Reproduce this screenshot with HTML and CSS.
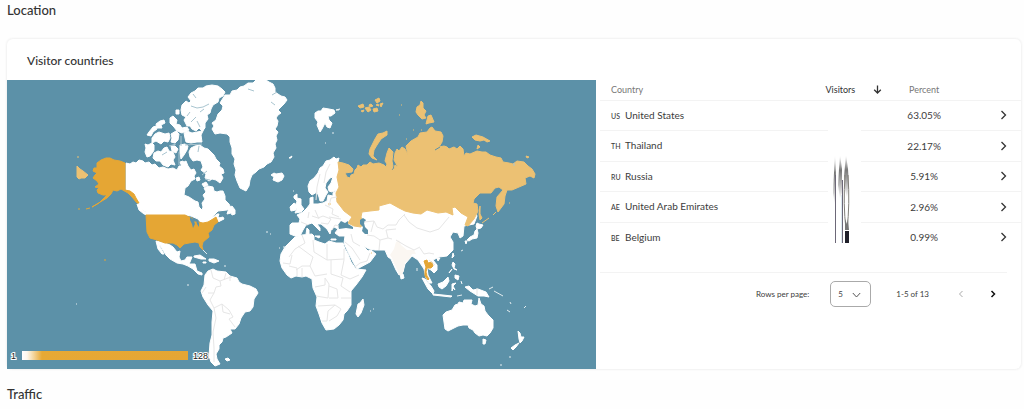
FILE: index.html
```html
<!DOCTYPE html>
<html lang="en">
<head>
<meta charset="utf-8">
<title>Location</title>
<link rel="stylesheet" href="styles.css">
</head>
<body>
<main class="page">
<h2 class="section-title">Location</h2>
<section class="card">
<h3 class="card-title">Visitor countries</h3>
<div class="card-body">
<div class="map">
<svg class="map-svg" viewBox="7 80 589 289" role="img" aria-label="Visitors by country">
<defs>
<linearGradient id="scale"><stop offset="0" stop-color="#fff"/><stop offset=".03" stop-color="#fdf8ee"/><stop offset=".12" stop-color="#e7a935"/><stop offset="1" stop-color="#e5a634"/></linearGradient>
</defs>
<rect x="7" y="80" width="589" height="289" fill="#5c91a8"/>
<g class="land">
<!-- Canada -->
<path d="M126 163L130 164 133 162 136 163 139 160 143 161 145 163 149 162 152 165 155 164 159 168 163 167 168 169 173 168 177 170 179 166 183 166 184 162 186 161 188 166 191 170 194 169 196 173 194 176 195 179 191 181 188 186 185 188 184 195 189 197 192 199 195 201 198 202 199 207 202 210 203 207 202 203 205 199 203 195 206 192 204 188 208 186 213 187 214 191 217 192 220 191 223 191 225 196 225 200 229 204 231 208 227 210 218 211 214 215 212 218 217 214 219 214 218 217 221 219 219 222 216 219 213 221 206 224 202 224 198 219 191 216 185 215 147 215 145 211 140 206 137 201 133 195 130 191 126 190z"/>
<path d="M188 97L191 93 195 91 198 88 203 88 206 86 212 85 218 86 222 89 225 92 223 96 219 98 218 102 213 105 211 109 210 113 207 115 208 119 205 123 205 128 202 131 199 128 196 131 192 129 190 126 187 126 184 120 186 117 182 115 181 110 182 105 186 101 189 103 191 101z"/>
<path d="M184 133L187 131 192 133 202 131 201 128 204 129 201 135 202 142 197 142 191 143 186 142 185 138zM171 134L176 131 179 134 178 140 175 143 171 142 172 138zM155 134L159 132 165 134 169 133 170 138 168 142 164 141 161 144 156 141 152 143 152 138zM149 132L153 127 156 126 157 129 153 132 151 136 147 135zM156 124L160 121 164 120 165 123 161 125 162 128 157 128zM170 118L173 116 177 120 176 124 180 125 183 130 186 131 182 133 177 131 174 127 170 123zM176 110h3v4h-3zM171 146h4l3 3-2 4-4-2zM182 128l5-1 2 3-4 2zM180 145l5-1 3 2-1 4-3 5-3 4-1-6zM180 162l3-1 2 3-3 3z"/>
<path d="M145 144L148 145 152 143 154 145 154 150 153 152 150 156 147 157 145 152 146 148zM154 153L158 151 161 152 164 148 167 147 169 151 173 152 175 157 173 160 175 165 171 164 168 167 163 165 160 161 156 161 153 158z"/>
<path d="M189 152L191 148 195 146 200 145 204 148 208 149 211 152 214 155 216 159 220 163 219 166 223 169 224 173 221 174 223 178 220 183 216 180 212 179 209 181 205 178 206 174 201 170 203 167 201 161 197 160 193 161 190 157zM202 184l4-2 2 3-4 2zM196 178l3-1 1 3-3 1zM137 204l3 1 5 7 3 3-4-1-5-4zM229 208l3-2 3 4 0 4-3 1-1-2-4 1zM219 218l4-1 1 2-4 2z"/>
<!-- Greenland -->
<path d="M225 95L230 95 232 91 237 90 240 87 244 86 248 83 253 83 256 80 266 80 269 82 273 84 275 88 275 92 278 94 281 96 285 97 287 100 284 104 281 107 278 110 281 113 278 115 276 118 278 121 277 126 275 129 278 132 276 136 277 140 275 144 276 148 273 153 274 157 271 162 267 164 264 167 259 169 256 172 252 175 250 180 249 186 246 191 240 188 237 181 235 175 236 170 234 164 235 159 232 154 232 148 230 142 230 137 227 134 220 133 215 134 212 129 214 126 212 123 216 120 218 114 222 110 223 106 220 103z"/>
<path d="M271 175L274 173 276 174 282 173 284 176 282 180 278 182 273 180 274 177zM289 158l3-2-1 2z"/>
<!-- Mexico, Central America and the Caribbean -->
<path d="M156 241L165 243 170 245 173 247 177 252 180 251 179 257 181 261 185 260 187 257 192 257 190 262 189 264 195 264 197 271 202 273 202 275 198 274 193 269 188 266 183 264 177 263 170 259 166 255 161 247 158 242 160 247 164 254 162 254 158 249zM194 256L200 255 206 259 201 259 194 257zM209 259l5 0 5 2-5 2-5-2zM203 262h3v1h-3z"/>
<!-- South America -->
<path d="M205 275L208 271 213 269 217 271 226 272 230 276 237 278 239 282 242 284 250 286 256 289 258 293 254 299 253 307 250 311 245 312 241 318 239 324 235 329 230 329 232 333 226 337 223 338 222 342 219 345 219 349 216 354 217 359 220 364 215 366 211 362 209 356 210 343 212 335 212 322 213 311 208 305 203 297 201 291 204 285z"/>
<path d="M225 359l3-1 2 2-3 1z"/>
<!-- Europe and Asia -->
<path d="M338 162L339 158 336 159 334 157 330 160 326 161 323 166 320 168 318 173 314 178 310 181 308 186 309 192 312 195 317 192 319 197 320 201 323 201 326 195 328 192 325 188 326 183 330 178 333 177 331 183 328 187 329 191 332 192 337 190 333 193 333 196 328 195 327 201 323 203 318 204 313 204 313 197 310 198 310 204 307 208 303 212 297 215 300 219 299 223 292 223 290 225 290 234 295 236 300 236 303 230 306 225 312 223 316 227 320 231 320 228 317 224 321 224 327 229 330 234 331 230 334 227 338 229 335 233 339 236 345 236 344 243 347 250 353 262 357 269 370 262 376 254 371 250 368 251 363 246 369 249 375 250 385 250 388 257 391 259 396 270 399 275 403 272 405 264 412 256 418 260 420 263 424 269 426 278 429 283 432 283 428 275 427 268 431 270 434 273 437 270 437 265 433 260 439 257 447 256 453 250 453 242 450 237 453 232 458 233 460 238 463 236 464 226 474 224 477 216 469 200 340 200z"/>
<path d="M290 207l4-4 3 2-1 5-5 1zM294 196l3-2 0 4 4 1 0 6 3 4-3 3-6 1 2-4-1-4 1-4-3-3zM307 228l2 2 0 5-3-1zM315 236l5 0-1 2zM331 239h5v1h-5z"/>
<path d="M315 113l3-2 3 0 2-3 6 1 5 1 1 3-4 3-3 0 1 4 3 3-2 5-3-1-2-4-3 6-2 3-3-7 1-3-3-4zM336 110l4-1M400 273l3 1 1 4-3 1z"/>
<!-- Japan and the islands of South-East Asia -->
<path d="M477 223l2 1 4 1-2 3-4 1-1-3zM477 229l1 4-1 5-5 1-3 2-2-1 3-3 4-2 1-4zM465 241l2 0-1 3zM453 253l1 3-2 2zM437 258l3 0-2 3zM453 262l2 2-1 4 3 2-3-1-2-4zM455 275l4 1-1 4-3-2zM452 269l-3 4zM422 278l3 1 6 7 3 5-1 3-5-5zM433 294l10 1 9 1-1 1-9-1-9-1zM438 284l5-2 5-5 1 4-3 5-4 3-3-2zM452 284l4-1-3 3 2 4-2-2-1 3zM461 281l1 3M465 287l4-1 4 4 5-1 8 3 3 5-5-1-6 0-8-5z"/>
<!-- Australia and New Zealand -->
<path d="M443 315L446 312 452 310 455 305 458 304 459 302 463 303 464 300 469 300 472 300 471 304 475 306 478 305 479 298 481 304 484 306 485 311 488 315 493 320 493 328 490 333 487 336 483 335 479 336 475 333 473 330 469 328 468 325 463 325 458 326 452 329 448 331 445 329zM483 339l3 1-1 4-2 0zM518 331l2 2 1 4 3 0-2 4-2 2-1-4zM519 343l-3 4-3 3-2-2 4-3z"/>
<!-- Africa -->
<path d="M292 240L295 237 302 235 312 234 314 236 314 240 319 242 325 244 329 241 336 243 343 243 345 249 348 254 351 262 356 269 366 270 362 277 356 285 351 291 351 305 347 311 344 314 343 320 339 325 334 329 326 330 322 323 319 314 316 306 317 297 313 288 312 279 306 276 302 277 296 276 291 278 287 275 282 268 280 261 281 254 285 247z"/>
<path d="M358 304l2-1 3-4 1 6-3 8-3 4-2-3z"/>
</g>
<path class="specks" d="M283 247h3M187 285h2M76 304h1M266 232h2M270 234h1M279 248h1M370 311h1M373 309h1M509 357h2M500 365h2M332 133h2M336 110h3M325 143h1M293 191h1M225 265v2M417 268v3M463 250l-2 1M507 310l3 2M524 308l2-2M510 302l1 2M489 289l4-2M494 291l9 5M457 296l5-1M203 250l4 4"/>
<!-- Visited countries -->
<path class="low" d="M392 258L390 255 394 249 396 242 399 240 401 245 407 250 414 250 416 254 412 254 410 258 405 263 403 273 400 276 394 263z"/>
<g class="high">
<path d="M125 163V190L130 191 134 194 136 198 139 203 137 203 132 197 128 193 121 189 117 191 113 190 111 194 107 198 102 201 97 204 92 207 99 203 103 199 107 195 103 195 98 193 97 190 99 188 95 187 99 184 97 181 93 178 95 175 97 173 93 171 94 168 97 168 97 163 101 160 106 158 110 158 114 160 120 161zM90 208l-4 1M80 209h-2M104 260h2"/>
<path d="M146 215H185L189 217 192 218 193 222 198 222 203 223 208 222 213 219 216 217 218 222 214 225 212 230 208 233 209 237 203 242 202 246 203 250 200 247 199 243 195 242 189 243 184 244 180 248 177 245 173 243 165 243 157 240 150 238 147 232z"/>
<path d="M424 261L427 260 428 263 432 262 433 266 431 268 427 268 426 272 427 276 429 279 428 280 425 276 425 271 426 267z"/>
</g>
<g class="mid">
<path d="M338 162L343 163 349 165 353 169 352 172 345 173 347 177 350 178 351 175 354 174 355 170 357 168 358 165 361 167 363 165 367 165 370 162 373 164 379 163 384 165 386 167 387 164 385 161 387 153 389 148 393 152 392 161 393 166 391 172 394 169 395 165 398 167 394 160 395 153 397 149 399 151 402 147 405 149 408 155 406 146 411 141 418 137 420 133 427 132 430 128 432 127 435 131 441 132 443 136 442 142 439 147 444 146 447 147 449 149 454 147 457 149 460 146 463 149 464 156 466 153 470 154 477 151 482 152 486 152 490 155 496 157 501 158 503 162 509 163 513 164 517 161 524 162 528 166 532 169 535 174 534 178 530 176 525 178 526 184 519 187 512 190 507 190 505 196 504 204 498 212 496 206 497 197 503 190 499 187 495 188 491 193 480 193 474 199 473 203 477 204 478 211 474 219 468 226 465 225 468 217 461 213 455 207 452 208 453 215 446 212 438 213 427 210 421 214 413 213 405 211 399 208 390 203 379 206 379 210 370 211 362 212 361 217 363 222 361 227 354 226 348 223 352 217 344 211 341 207 337 202 336 193 339 187 337 177 339 170z"/>
<path d="M387 131L383 133 378 134 375 139 372 145 370 149 369 154 372 158 377 160 373 156 374 150 377 145 381 139 387 135zM369 105L371 104 373 106 370 107zM375 100L379 98 380 101 377 103zM380 104L383 103 381 107zM358 106l5-2 1 3-4 1zM365 108l4-1 2 3-3 2zM373 109l4-1 1 3-4 1zM376 105l2-1 1 2zM361 111l3-1-1 2zM417 107l3-2 1-4 2 2 0 5 3 3-2 4 2 3-4 1-4-4-2-3zM428 116l3-1 3 7-5 1-3 1zM472 137l4-2 7 2 7 4-3 1-3-2-4 1-5-1zM478 145l2 2-3 2zM526 156l3 1-2 1zM480 206l0 8 2 4-2 2-1-6z"/>
<path d="M482 223l7-5M493 215l3-3M509 203h1M399 115h1M406 139h1M413 130h1M421 130h1M77 157h2M328 204h3M371 253h1M401 105h1M77 166L80 169 83 171 88 175 85 178 81 178 79 179 77 177z"/>
</g>
<!-- Inland seas, lakes and fjords -->
<path class="water" d="M338 225L341 221 345 223 348 221 348 224 353 227 353 229 346 228 339 229zM360 220L363 218 366 220 364 223 365 227 368 230 368 234 365 234 362 231 363 227 360 224zM190 217l3 2 2 5-2 4-1-4-2-4zM196 219l3 4 0 4-2-3z"/>
<path class="fjord" d="M185 145l17-1M181 136v10M179 152v13M191 106l6 2 6-1 6-3M191 122l5-5M199 146l-1 6M207 171l-5 4M210 180l-5-1M169 146l7-2M167 152l-5 3M204 109l-4 3M248 89l6 2M272 95l5-3M275 105l-4-3M196 98l-3-4M200 127l-3-6M187 116l3-4M514 163v3"/>
<path class="inlet" d="M440 147l-5 3"/>
<!-- Borders -->
<path class="border" d="M211 270l2 8 7 3 1 5-5 1-2 6-6 0M220 281l8-3 4-1M226 273l-2 7M230 276v5M206 287l-4 6M214 293l-4 7 4 8 8-4 7 6 4 7-4 2 6 8M214 308l2 10-3 14 1 16 0 14M222 304l1 8 7 2M329 217l12 2M315 210l4 9M312 216l6 2 5-2 8 3-3 5-7-1M325 205l8 4-1 5 7 3M301 222l7 3M309 212l-1 6M329 206l2-8 6-1M324 183l2-11 4-8M316 200l1-13 3-13M332 230l3-5 4 1M351 234l2 8 7 4M345 242l7 6 8 12M355 267l5-4 7-2 3-8M367 235l7 1 6 4-1 10M380 240l8-2 4 1M364 222l10-1 3 6 6 2 5-4 8 0 3-5 6-6M374 221l-3 11M388 238l-2-8 10-1M404 215l5 7 8 6 13 4 9-3 10-12M396 240l10 6 8 4 6-3M420 248l4 6 5-1 5 1M429 260l6 5M302 235l3 8-10 6-6 8M313 240l1 12 13 8 0-16M327 260l17-1M344 249v11M331 260l0 14 12 4M298 246l15 11-3 9-8 0-6 4M292 255l-2 9-7-1M310 266l5 10 12-2M289 266l8 2 0 8M302 268v9M344 260l-3 15 9 4 9-4M315 287l10-2 0-7M325 278l4 6-1 14-12-2M329 286l8 3 1 9-9 0M343 278l-2 8 9 6M341 298l10 0M335 305l-7 6-1 10-5 0M318 306l17-1 6 4-4 7-8 5M477 288v7"/>
<g class="legend">
<rect x="22" y="351" width="166" height="9" fill="url(#scale)"/>
<text x="11" y="359">1</text><text x="193" y="359">128</text>
</g>
</svg>
</div>
<div class="panel">
<div class="table-wrap">
<table class="countries">
<colgroup><col class="c-country"><col class="c-visitors"><col class="c-percent"><col class="c-open"></colgroup>
<thead><tr><th scope="col">Country</th><th scope="col" class="sorted"><button class="sort" type="button">Visitors <svg width="9" height="9" viewBox="0 0 9 9"><path d="M4.500 .5v7.500M1.200 4.700l3.300 3.300 3.300-3.300"/></svg></button></th><th scope="col" class="pct">Percent</th><th></th></tr></thead>
<tbody>
<tr><td><span class="code">US</span>United States</td><td></td><td class="pct">63.05%</td><td class="open"><button type="button" aria-label="Open United States"><svg width="7" height="10" viewBox="0 0 7 10"><path d="M1.500 1l4 4-4 4"/></svg></button></td></tr>
<tr><td><span class="code">TH</span>Thailand</td><td></td><td class="pct">22.17%</td><td class="open"><button type="button" aria-label="Open Thailand"><svg width="7" height="10" viewBox="0 0 7 10"><path d="M1.500 1l4 4-4 4"/></svg></button></td></tr>
<tr><td><span class="code">RU</span>Russia</td><td></td><td class="pct">5.91%</td><td class="open"><button type="button" aria-label="Open Russia"><svg width="7" height="10" viewBox="0 0 7 10"><path d="M1.500 1l4 4-4 4"/></svg></button></td></tr>
<tr><td><span class="code">AE</span>United Arab Emirates</td><td></td><td class="pct">2.96%</td><td class="open"><button type="button" aria-label="Open United Arab Emirates"><svg width="7" height="10" viewBox="0 0 7 10"><path d="M1.500 1l4 4-4 4"/></svg></button></td></tr>
<tr><td><span class="code">BE</span>Belgium</td><td></td><td class="pct">0.99%</td><td class="open"><button type="button" aria-label="Open Belgium"><svg width="7" height="10" viewBox="0 0 7 10"><path d="M1.500 1l4 4-4 4"/></svg></button></td></tr>
</tbody>
</table>
<svg class="streaks" width="33" height="120" viewBox="828 125 33 120" aria-hidden="true">
<defs><linearGradient id="s" x2="0" y2="1"><stop offset="0" stop-color="#555" stop-opacity="0"/><stop offset=".35" stop-color="#555" stop-opacity=".8"/><stop offset="1" stop-color="#555" stop-opacity="0"/></linearGradient></defs>
<rect x="828" y="125" width="33" height="120" fill="#fff"/>
<path d="M835 155l1 20v30h-1l-2-12 1-20z" fill="url(#s)"/>
<path d="M840 155l2 14v24l-2 6-2-14 1-16z" fill="url(#s)"/>
<path d="M846 155l2 14 1 17-2 12-2-8-1-14z" fill="url(#s)"/>
<path d="M835.500 175v68M842.500 180v63" stroke="#6d6878" fill="none"/>
<path d="M841.500 195v48" stroke="#dceaf0" fill="none"/>
<path d="M845 175q-2 30 1 54M848 175q2 30-1 54" stroke="#817f79" fill="none"/>
<path d="M845 219l2 5 1-5 1 11h-4z" fill="#777"/>
<rect x="845" y="231" width="4" height="12" fill="#20202a"/>
</svg>
</div>
<div class="pager">
<label for="rows">Rows per page:</label>
<div class="select-box"><select id="rows"><option>5</option><option>10</option></select><svg width="9" height="6" viewBox="0 0 9 6"><path d="M.8 1l3.700 4 3.700-4"/></svg></div>
<span class="range">1-5 of 13</span>
<div class="pager-nav">
<button type="button" class="prev" disabled aria-label="Previous page"><svg width="6" height="8" viewBox="0 0 6 8"><path d="M4.500 1l-3 3 3 3"/></svg></button>
<button type="button" class="next" aria-label="Next page"><svg width="6" height="8" viewBox="0 0 6 8"><path d="M1.500 1l3 3-3 3"/></svg></button>
</div>
</div>
</div>
</div>
</section>
<h2 class="section-title">Traffic</h2>
</main>
</body>
</html>
```

FILE: styles.css
```css
* { box-sizing: border-box; }
body { margin: 0; background: #fefefe; color: #3c3c3c; font-family: Lato, "Open Sans", sans-serif; font-size: 10px; }
.page { padding: 0 3px 0 7px; }
.section-title { margin: 0; padding-top: 1px; font-size: 13px; line-height: 18px; font-weight: 500; color: #333; }
.card { margin: 20px 0 15px; background: #fff; border-radius: 6px; box-shadow: 0 0 2px 1px #f1f1f1; }
.card-title { margin: 0; padding: 13px 20px 10px; font-size: 12px; line-height: 18px; font-weight: 500; color: #333; }
.card-body { display: grid; grid-template-columns: 589fr 425fr; }
.map-svg { display: block; width: 100%; height: auto; }
.land { fill: #fff; stroke: #fff; stroke-width: 1; stroke-linejoin: round; }
.specks { fill: none; stroke: #e4edf0; stroke-width: 1; }
.low { fill: #fbf7f2; }
.mid { fill: #ecc173; stroke: #ecc173; stroke-width: 1; }
.high { fill: #e5a634; stroke: #e5a634; stroke-width: 1; }
.water { fill: #5c91a8; }
.fjord { fill: none; stroke: #a9c5d0; stroke-width: 1; }
.inlet { fill: none; stroke: #5c91a8; stroke-width: 1; }
.border { fill: none; stroke: #e6e6e6; stroke-width: 1; }
.legend text { font: 9px "Liberation Sans", sans-serif; fill: #222; stroke: #fff; stroke-width: 2; paint-order: stroke; }
.table-wrap { position: relative; padding-left: 4px; }
.countries { width: 100%; height: 172px; table-layout: fixed; border-collapse: collapse; }
.c-country { width: 50%; }
.c-visitors { width: 20%; }
.c-percent { width: 14%; }
.countries th { height: 20px; padding: 0 11px; font-size: 9px; font-weight: 400; text-align: left; color: #777; }
.countries td { padding: 0 11px; line-height: 16px; }
.countries tr { border-bottom: 1px solid #f3f3f3; }
.countries tbody tr:last-child { border-bottom: 0; }
.countries .pct { padding: 0; text-align: center; }
.code { display: inline-block; min-width: 14px; font-size: 7px; font-weight: 500; }
.countries .sorted { padding: 0 15px; }
button { padding: 0; border: 0; background: none; font: inherit; color: inherit; }
.sort { display: flex; align-items: center; justify-content: space-between; width: 56px; color: #333; }
.sort svg, .open svg, .pager svg { display: block; fill: none; stroke: #333; stroke-width: 1.3; }
.countries .open { padding: 0 14px; }
.open button { display: block; margin-left: auto; }
.streaks { position: absolute; left: 232px; top: 45px; }
.pager { display: flex; align-items: center; justify-content: flex-end; margin: 20px 14px 0 4px; padding: 8px 11px; border-top: 1px solid #f3f3f3; font-size: 8px; }
.select-box { position: relative; margin: 0 25px 0 21px; }
.select-box select { display: block; width: 41px; height: 26px; padding: 0 7px; border: 1px solid #aaa; border-radius: 5px; appearance: none; background: #fff; color: #444; font: inherit; }
.select-box svg { position: absolute; right: 10px; top: 11px; stroke: #555; stroke-width: 1; pointer-events: none; }
.pager-nav { display: flex; gap: 26px; margin-left: 29px; }
.pager .prev svg { stroke: #aaa; stroke-width: 1; }
.pager .next svg { stroke: #111; stroke-width: 1.5; }
```
